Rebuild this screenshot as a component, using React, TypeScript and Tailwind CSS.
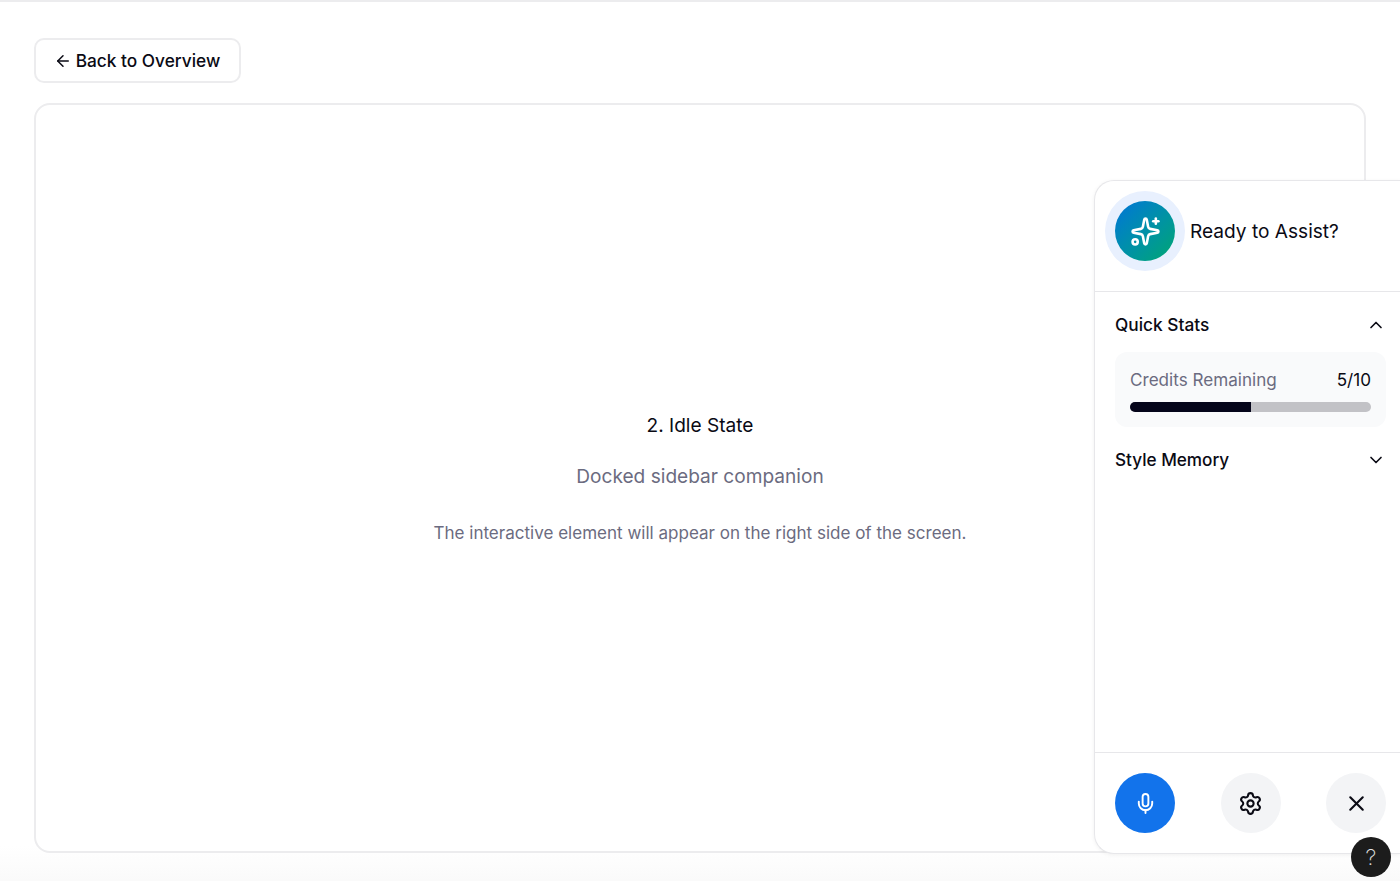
import { ArrowLeft, ChevronDown, ChevronUp, Mic, Settings, Sparkles, X } from "lucide-react";

const font = { fontFamily: "Inter, 'Noto Sans', sans-serif" };

function Sidebar() {
  return (
    <aside className="absolute right-0 top-[178px] flex h-[674px] w-[306px] flex-col rounded-l-[20px] border border-r-0 border-[#e7e7ea] bg-white shadow-[0_1px_4px_rgba(0,0,0,0.06)]">
      <div className="flex h-[111px] shrink-0 items-start gap-[15px] border-b border-[#e7e7ea] pl-[20px] pt-[20px]">
        <div className="flex h-[60px] w-[60px] items-center justify-center rounded-full bg-gradient-to-br from-[#0a72d8] to-[#0ea66e] ring-[10px] ring-[#e8f0fe]">
          <Sparkles size={31} strokeWidth={2} className="text-white" />
        </div>
        <span className="text-[19.1px] leading-[60px] text-[#0a0a14]">Ready to Assist?</span>
      </div>
      <div className="flex flex-1 flex-col pl-[20px] pr-[14px]">
        <div className="flex h-[60px] items-center justify-between pt-[6px]">
          <span className="text-[17.3px] font-medium text-[#0a0a14]">Quick Stats</span>
          <ChevronUp size={20} strokeWidth={2} className="text-[#0a0a14]" />
        </div>
        <div className="h-[75px] rounded-xl bg-[#f9fafb] px-[15px] pt-[16px]">
          <div className="flex items-center justify-between text-[17.1px] leading-6">
            <span className="text-[#6b6b80]">Credits Remaining</span>
            <span className="text-[#0a0a14]">5/10</span>
          </div>
          <div className="mt-[10px] h-[10px] overflow-hidden rounded-full bg-[#c2c2c6]">
            <div className="h-full w-1/2 bg-[#05051a]" />
          </div>
        </div>
        <div className="flex h-[66px] items-center justify-between">
          <span className="text-[17.15px] font-medium text-[#0a0a14]">Style Memory</span>
          <ChevronDown size={20} strokeWidth={2} className="text-[#0a0a14]" />
        </div>
      </div>
      <div className="flex h-[101px] shrink-0 justify-between border-t border-[#e7e7ea] pl-[20px] pr-[14px] pt-[20px]">
        <button className="flex h-[60px] w-[60px] items-center justify-center rounded-full bg-[#1273eb] text-white">
          <Mic size={23} strokeWidth={2} />
        </button>
        <button className="flex h-[60px] w-[60px] items-center justify-center rounded-full bg-[#f3f4f6] text-[#0a0a14]">
          <Settings size={25} strokeWidth={2} />
        </button>
        <button className="flex h-[60px] w-[60px] items-center justify-center rounded-full bg-[#f3f4f6] text-[#0a0a14]">
          <X size={25} strokeWidth={2} />
        </button>
      </div>
    </aside>
  );
}

export default function App() {
  return (
    <div
      style={font}
      className="relative h-[881px] w-full overflow-hidden border-t-2 border-[#ececee] bg-gradient-to-b from-white from-[96%] to-[#fafafa]"
    >
      <div className="px-[34px] pt-[36px]">
        <button className="flex h-[45px] w-[207px] items-center justify-center gap-[4px] rounded-[10px] border-2 border-[#ececee] bg-white pr-[1px] text-[17.3px] font-medium text-[#0a0a14]">
          <ArrowLeft size={18} strokeWidth={2} />
          Back to Overview
        </button>
        <main className="mt-[20px] flex h-[750px] w-[1332px] flex-col items-center rounded-[16px] border-2 border-[#ececee] bg-white pt-[306px] text-center">
          <h1 className="text-[19.1px] leading-7 text-[#0a0a14]">2. Idle State</h1>
          <p className="mt-[22.5px] text-[19.1px] leading-7 text-[#6b6b80]">Docked sidebar companion</p>
          <p className="mt-[31px] text-[17.05px] leading-6 text-[#6b6b80]">
            The interactive element will appear on the right side of the screen.
          </p>
        </main>
      </div>
      <Sidebar />
      <button className="absolute bottom-[4px] right-[9px] flex h-[40px] w-[40px] items-center justify-center rounded-full bg-[#1c1c1c] text-[22px] font-extralight text-[#e0e0e0]">
        ?
      </button>
    </div>
  );
}
